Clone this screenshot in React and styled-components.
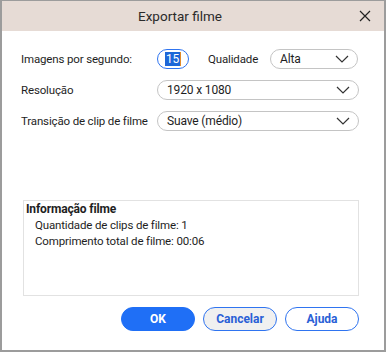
import styled, { createGlobalStyle } from "styled-components";

const GlobalStyle = createGlobalStyle`
  html, body {
    margin: 0;
    padding: 0;
    background: #ffffff;
  }
  body {
    font-family: Roboto, "Noto Sans", sans-serif;
    color: #1e1e1e;
  }
`;

const Chevron = () => (
  <svg width="14" height="8" viewBox="0 0 14 8" fill="none">
    <path d="M1 1l6 6 6-6" stroke="#333" strokeWidth="1.2" />
  </svg>
);

const CloseIcon = () => (
  <svg width="12" height="12" viewBox="0 0 12 12" fill="none">
    <path d="M1 1l10 10M11 1L1 11" stroke="#222" strokeWidth="1.2" />
  </svg>
);

const App = () => {
  return (
    <>
      <GlobalStyle />
      <Dialog>
        <TitleBar>
          <Title>Exportar filme</Title>
          <CloseButton aria-label="Fechar">
            <CloseIcon />
          </CloseButton>
        </TitleBar>

        <Body>
          <Form>
            <Row>
              <Label>Imagens por segundo:</Label>
              <NumberBox>
                <Selected>15</Selected>
                <Caret />
              </NumberBox>
              <InlineLabel>Qualidade</InlineLabel>
              <Select $width="88px">
                <span>Alta</span>
                <Chevron />
              </Select>
            </Row>
            <Row>
              <Label>Resolução</Label>
              <Select $grow>
                <span>1920 x 1080</span>
                <Chevron />
              </Select>
            </Row>
            <Row>
              <Label>Transição de clip de filme</Label>
              <Select $grow>
                <span>Suave (médio)</span>
                <Chevron />
              </Select>
            </Row>
          </Form>

          <InfoBox>
            <InfoTitle>Informação filme</InfoTitle>
            <InfoLine>Quantidade de clips de filme: 1</InfoLine>
            <InfoLine>Comprimento total de filme: 00:06</InfoLine>
          </InfoBox>

          <Footer>
            <Button $variant="primary">OK</Button>
            <Button $variant="grey">Cancelar</Button>
            <Button>Ajuda</Button>
          </Footer>
        </Body>
      </Dialog>
    </>
  );
};

const Dialog = styled.div`
  width: 386px;
  height: 352px;
  box-sizing: border-box;
  border-left: 2px solid #9c9c9c;
  border-right: 2px solid #9c9c9c;
  border-top: 1px solid #9c9c9c;
  border-bottom: 2px solid #9c9c9c;
  display: flex;
  flex-direction: column;
  background: #fff;
  font-size: 11.5px;
  letter-spacing: -0.15px;
`;

const TitleBar = styled.div`
  height: 30px;
  background: #e6dbd5;
  position: relative;
  display: flex;
  align-items: center;
  justify-content: center;
  padding-right: 26px;
`;

const Title = styled.div`
  font-size: 13.5px;
  letter-spacing: 0;
  color: #2a2a2a;
`;

const CloseButton = styled.button`
  position: absolute;
  right: 12px;
  top: 8px;
  border: none;
  background: none;
  padding: 0;
  width: 14px;
  height: 14px;
  display: flex;
  align-items: center;
  justify-content: center;
`;

const Body = styled.div`
  flex: 1;
  display: flex;
  flex-direction: column;
  padding: 18px 25px 0 19px;
`;

const Form = styled.div`
  display: flex;
  flex-direction: column;
  gap: 11px;
`;

const Row = styled.div`
  display: flex;
  align-items: center;
  height: 20px;
`;

const Label = styled.div`
  width: 136px;
  white-space: nowrap;
`;

const InlineLabel = styled.div`
  margin: 0 12px 0 19px;
`;

const NumberBox = styled.div`
  width: 32px;
  height: 20px;
  box-sizing: border-box;
  border: 1.5px solid #2f74f0;
  border-radius: 10px;
  display: flex;
  align-items: center;
  justify-content: center;
  font-size: 12px;
`;

const Selected = styled.span`
  background: #1d67d8;
  color: #fff;
  line-height: 14px;
  padding: 0 1px;
`;

const Caret = styled.span`
  width: 1px;
  height: 14px;
  background: #e08a2a;
`;

const Select = styled.div`
  ${(p) => (p.$grow ? "flex: 1;" : `width: ${p.$width};`)}
  height: 20px;
  box-sizing: border-box;
  border: 1px solid #c4c4c4;
  border-radius: 10px;
  display: flex;
  align-items: center;
  justify-content: space-between;
  padding: 0 8px 0 9px;
  font-size: 12px;
`;

const InfoBox = styled.div`
  margin-top: 69px;
  margin-left: 2px;
  height: 96px;
  box-sizing: border-box;
  border: 1px solid #e2e2e2;
  padding: 1px 2px;
`;

const InfoTitle = styled.div`
  font-weight: 700;
  font-size: 12px;
  line-height: 15px;
`;

const InfoLine = styled.div`
  padding-left: 9px;
  line-height: 16px;
`;

const Footer = styled.div`
  display: flex;
  justify-content: flex-end;
  gap: 8px;
  margin-top: 11px;
`;

const Button = styled.button`
  width: 74px;
  height: 24px;
  border-radius: 12px;
  font-family: inherit;
  font-size: 12px;
  font-weight: 700;
  box-sizing: border-box;
  border: 1px solid #2f74f0;
  color: ${(p) => (p.$variant === "primary" ? "#fff" : "#2a5fd6")};
  background: ${(p) =>
    p.$variant === "primary" ? "#1f6ff6" : p.$variant === "grey" ? "#f0f0f0" : "#fff"};
  ${(p) => p.$variant === "primary" && "border-color: #1f6ff6;"}
`;

export default App;
